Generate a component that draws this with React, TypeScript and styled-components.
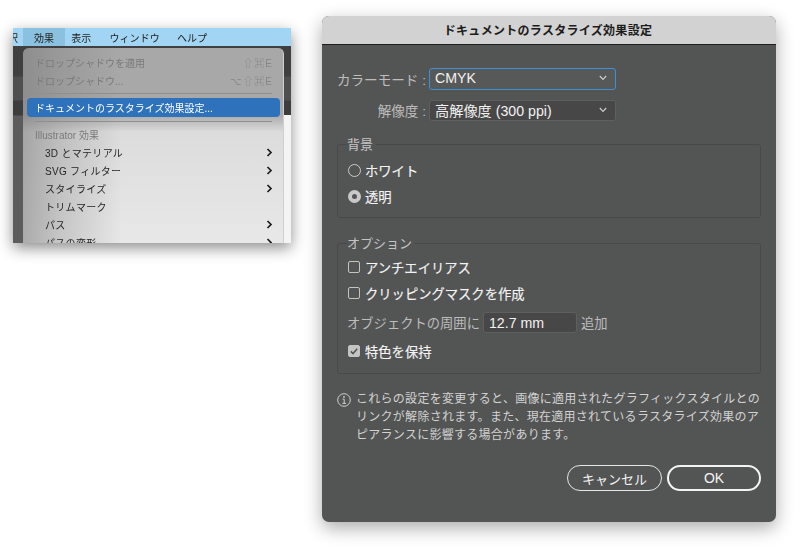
import React from "react";
import styled, { createGlobalStyle } from "styled-components";

const Global = createGlobalStyle`
  html, body { margin: 0; padding: 0; background: #fff; }
  body { font-family: "Liberation Sans", "Noto Sans CJK JP", sans-serif; width: 800px; height: 548px; overflow: hidden; }
`;

const Page = styled.div`
  display: flex;
  align-items: flex-start;
  padding: 16px 0 0 13px;
`;

const MenuWindow = styled.div`
  position: relative;
  flex: none;
  width: 278px;
  height: 215px;
  margin-top: 12px;
  background: #4c4c4c;
  box-shadow: 0 5px 14px rgba(0, 0, 0, 0.45);
  filter: blur(0.35px);
`;

const WindowClip = styled.div`
  position: absolute;
  inset: 0;
  overflow: hidden;
`;

const MenuBar = styled.div`
  display: flex;
  align-items: center;
  height: 18px;
  background: #a1d5f3;
  font-size: 10px;
  letter-spacing: 0.1px;
  color: #222;
`;

const BarCut = styled.span`
  width: 5px;
  margin-right: 5px;
  flex: none;
  white-space: nowrap;
  overflow: hidden;
  direction: rtl;
`;

const BarItem = styled.span<{ $active?: boolean; $gap: number }>`
  display: flex;
  align-items: center;
  height: 100%;
  margin-left: ${(p) => p.$gap}px;
  padding: 0 ${(p) => (p.$active ? 11 : 0)}px;
  background: ${(p) => (p.$active ? "#8ac1df" : "transparent")};
`;

const BackDrop = styled.div`
  height: 197px;
  background: linear-gradient(
    to bottom,
    #3f3f3f 0,
    #3f3f3f 30px,
    #4f4f4f 31px,
    #4f4f4f 54px,
    #3d3d3d 55px,
    #3d3d3d 69px,
    #5c5c5c 70px
  );
`;

const RightPatch = styled.div`
  position: absolute;
  right: 0;
  top: 87px;
  bottom: 0;
  width: 7px;
  background: #f4f4f4;
`;

const Menu = styled.div`
  position: absolute;
  left: 10px;
  top: 20px;
  width: 261px;
  height: 195px;
  box-sizing: border-box;
  padding: 5px 3px 0 4px;
  border-radius: 6px 6px 0 0;
  overflow: hidden;
  font-size: 10px;
  color: #262626;
  background:
    linear-gradient(to right, rgba(120, 120, 120, 0.55) 0, rgba(120, 120, 120, 0.3) 14%, rgba(120, 120, 120, 0) 38%),
    linear-gradient(to bottom, #a8a8a8 0, #a8a8a8 34%, #dcdcdc 43%, #e8e8e8 100%);
  border-right: 1px solid #cfcfcf;
`;

const Row = styled.div<{ $indent?: boolean; $dim?: boolean; $active?: boolean }>`
  display: flex;
  align-items: center;
  justify-content: space-between;
  height: ${(p) => (p.$active ? 19 : 18.1)}px;
  padding: 0 7px 0 ${(p) => (p.$indent ? 18 : 8)}px;
  border-radius: 4px;
  letter-spacing: ${(p) => (p.$indent ? 0.3 : 0)}px;
  color: ${(p) => (p.$active ? "#fff" : p.$dim ? "#7a7a7a" : "#262626")};
  background: ${(p) => (p.$active ? "#2d72bb" : "transparent")};
  white-space: nowrap;
`;

const Shortcut = styled.span`
  font-size: 10px;
  letter-spacing: 1px;
  color: #868686;
`;

const Divider = styled.div<{ $top: number; $bottom: number }>`
  height: 1px;
  margin: ${(p) => p.$top}px 8px ${(p) => p.$bottom}px;
  background: #8f8f8f;
`;

const Chevron = () => (
  <svg width="7" height="9" viewBox="0 0 7 9" fill="none" stroke="#1c1c1c" strokeWidth="1.7">
    <path d="M1.5 1 L5 4.5 L1.5 8" />
  </svg>
);

const Dialog = styled.div`
  flex: none;
  width: 454px;
  height: 506px;
  margin-left: 31px;
  border-radius: 7px;
  overflow: hidden;
  background: #535554;
  box-shadow: 0 6px 18px rgba(0, 0, 0, 0.33);
  display: flex;
  flex-direction: column;
  color: #f0f0f0;
  font-size: 13.3px;
`;

const TitleBar = styled.div`
  flex: none;
  box-sizing: border-box;
  height: 29px;
  padding: 0 2px 2px 0;
  display: flex;
  align-items: center;
  justify-content: center;
  background: #d2d2d2;
  border-bottom: 1px solid #1e1e1e;
  color: #1c1c1c;
  font-size: 12px;
  font-weight: 700;
  letter-spacing: 0.3px;
`;

const Body = styled.div`
  flex: 1;
  display: flex;
  flex-direction: column;
  padding: 23px 15px 0;
`;

const FormRow = styled.div`
  display: grid;
  grid-template-columns: 90px 187px;
  column-gap: 3px;
  align-items: center;
  margin: 0 0 10px -1px;
`;

const FieldLabel = styled.label`
  text-align: right;
  color: #bdbdbd;
  font-size: 13.6px;
  white-space: nowrap;
`;

const Select = styled.div<{ $focused?: boolean }>`
  box-sizing: border-box;
  height: 21.5px;
  display: flex;
  align-items: center;
  justify-content: space-between;
  padding: 0 8px 1px 5px;
  border-radius: 3px;
  font-size: 14.2px;
  color: #f2f2f2;
  background: ${(p) => (p.$focused ? "#575958" : "#474747")};
  border: 1px solid ${(p) => (p.$focused ? "#3f8fd6" : "#5f5f5f")};
`;

const Caret = () => (
  <svg width="8" height="6" viewBox="0 0 8 6" fill="none" stroke="#d0d0d0" strokeWidth="1.1">
    <path d="M0.8 1 L4 4.4 L7.2 1" />
  </svg>
);

const Group = styled.fieldset<{ $height: number; $top: number }>`
  box-sizing: border-box;
  height: ${(p) => p.$height}px;
  margin: ${(p) => p.$top}px 0 0;
  padding: 0 10px;
  border: 1px solid #484a49;
  border-radius: 3px;
  min-width: 0;
`;

const Legend = styled.legend`
  margin-left: -1px;
  padding: 2px 3px 0 0;
  font-size: 13px;
  line-height: 14px;
  color: #c4c4c4;
`;

const Option = styled.div<{ $top: number }>`
  display: flex;
  align-items: center;
  height: 16px;
  margin-top: ${(p) => p.$top}px;
  color: #f4f4f4;
  gap: 4px;
  -webkit-text-stroke: 0.15px #f4f4f4;
`;

const Radio = styled.span<{ $on?: boolean }>`
  box-sizing: border-box;
  flex: none;
  width: 13px;
  height: 13px;
  border-radius: 50%;
  border: ${(p) => (p.$on ? "4px solid #c9c9c9" : "1px solid #c9c9c9")};
  background: ${(p) => (p.$on ? "#535554" : "transparent")};
`;

const Box = styled.span<{ $on?: boolean }>`
  box-sizing: border-box;
  flex: none;
  width: 12px;
  height: 12px;
  border-radius: 2px;
  margin-right: 1px;
  display: flex;
  align-items: center;
  justify-content: center;
  border: 1px solid #c4c4c4;
  background: ${(p) => (p.$on ? "#c4c4c4" : "transparent")};
`;

const OffsetRow = styled.div`
  display: flex;
  align-items: center;
  height: 21px;
  margin: 11px 0 0 -1px;
  color: #bdbdbd;
  white-space: nowrap;
`;

const OffsetInput = styled.div`
  box-sizing: border-box;
  width: 94px;
  height: 21px;
  margin: 0 4px 0 3px;
  padding: 0 5px;
  display: flex;
  align-items: center;
  border: 1px solid #5f5f5f;
  border-radius: 3px;
  background: #474747;
  color: #f2f2f2;
  font-size: 14.2px;
`;

const Info = styled.div`
  display: flex;
  gap: 5px;
  margin-top: 16px;
  font-size: 12px;
  line-height: 18px;
  letter-spacing: 0.28px;
  color: #d2d2d2;
`;

const InfoIcon = styled.svg`
  flex: none;
  margin-top: 3px;
`;

const Buttons = styled.div`
  display: flex;
  justify-content: flex-end;
  gap: 5px;
  margin-top: 21px;
`;

const Button = styled.button<{ $primary?: boolean }>`
  box-sizing: border-box;
  width: ${(p) => (p.$primary ? 94 : 95)}px;
  height: 26px;
  padding: 0;
  border-radius: 13px;
  background: transparent;
  border: ${(p) => (p.$primary ? "2px solid #f4f4f4" : "1px solid #e6e6e6")};
  color: #f4f4f4;
  font: inherit;
  font-size: ${(p) => (p.$primary ? 14 : 13)}px;
`;

export default function App() {
  return (
    <>
      <Global />
      <Page>
        <MenuWindow>
          <WindowClip>
            <MenuBar>
              <BarCut>選択</BarCut>
              <BarItem $active $gap={0}>効果</BarItem>
              <BarItem $gap={6}>表示</BarItem>
              <BarItem $gap={18}>ウィンドウ</BarItem>
              <BarItem $gap={17}>ヘルプ</BarItem>
            </MenuBar>
            <BackDrop />
            <RightPatch />
            <Menu>
              <Row $dim>
                <span>ドロップシャドウを適用</span>
                <Shortcut>⇧⌘E</Shortcut>
              </Row>
              <Row $dim>
                <span>ドロップシャドウ...</span>
                <Shortcut>⌥⇧⌘E</Shortcut>
              </Row>
              <Divider $top={4} $bottom={4} />
              <Row $active>ドキュメントのラスタライズ効果設定...</Row>
              <Divider $top={4} $bottom={3} />
              <Row $dim>Illustrator 効果</Row>
              <Row $indent>
                <span>3D とマテリアル</span>
                <Chevron />
              </Row>
              <Row $indent>
                <span>SVG フィルター</span>
                <Chevron />
              </Row>
              <Row $indent>
                <span>スタイライズ</span>
                <Chevron />
              </Row>
              <Row $indent>トリムマーク</Row>
              <Row $indent>
                <span>パス</span>
                <Chevron />
              </Row>
              <Row $indent>
                <span>パスの変形</span>
                <Chevron />
              </Row>
            </Menu>
          </WindowClip>
        </MenuWindow>

        <Dialog>
          <TitleBar>ドキュメントのラスタライズ効果設定</TitleBar>
          <Body>
            <FormRow>
              <FieldLabel>カラーモード :</FieldLabel>
              <Select $focused>
                <span>CMYK</span>
                <Caret />
              </Select>
            </FormRow>
            <FormRow>
              <FieldLabel>解像度 :</FieldLabel>
              <Select>
                <span>高解像度 (300 ppi)</span>
                <Caret />
              </Select>
            </FormRow>

            <Group $height={82} $top={5}>
              <Legend>背景</Legend>
              <Option $top={10}>
                <Radio />
                ホワイト
              </Option>
              <Option $top={10}>
                <Radio $on />
                透明
              </Option>
            </Group>

            <Group $height={139} $top={17}>
              <Legend>オプション</Legend>
              <Option $top={8}>
                <Box />
                アンチエイリアス
              </Option>
              <Option $top={10}>
                <Box />
                クリッピングマスクを作成
              </Option>
              <OffsetRow>
                オブジェクトの周囲に
                <OffsetInput>12.7 mm</OffsetInput>
                追加
              </OffsetRow>
              <Option $top={10}>
                <Box $on>
                  <svg width="8" height="7" viewBox="0 0 8 7" fill="none" stroke="#535554" strokeWidth="1.5">
                    <path d="M0.8 3.4 L3 5.6 L7.2 0.8" />
                  </svg>
                </Box>
                特色を保持
              </Option>
            </Group>

            <Info>
              <InfoIcon width="14" height="14" viewBox="0 0 14 14" fill="none" stroke="#cfcfcf" strokeWidth="1">
                <circle cx="7" cy="7" r="6.3" />
                <path d="M5.6 6.2 H7.2 V10.4 M5.4 10.4 H9" />
                <circle cx="7" cy="3.9" r="0.5" fill="#cfcfcf" />
              </InfoIcon>
              <span>
                これらの設定を変更すると、画像に適用されたグラフィックスタイルとの
                リンクが解除されます。また、現在適用されているラスタライズ効果のア
                ピアランスに影響する場合があります。
              </span>
            </Info>

            <Buttons>
              <Button>キャンセル</Button>
              <Button $primary>OK</Button>
            </Buttons>
          </Body>
        </Dialog>
      </Page>
    </>
  );
}
